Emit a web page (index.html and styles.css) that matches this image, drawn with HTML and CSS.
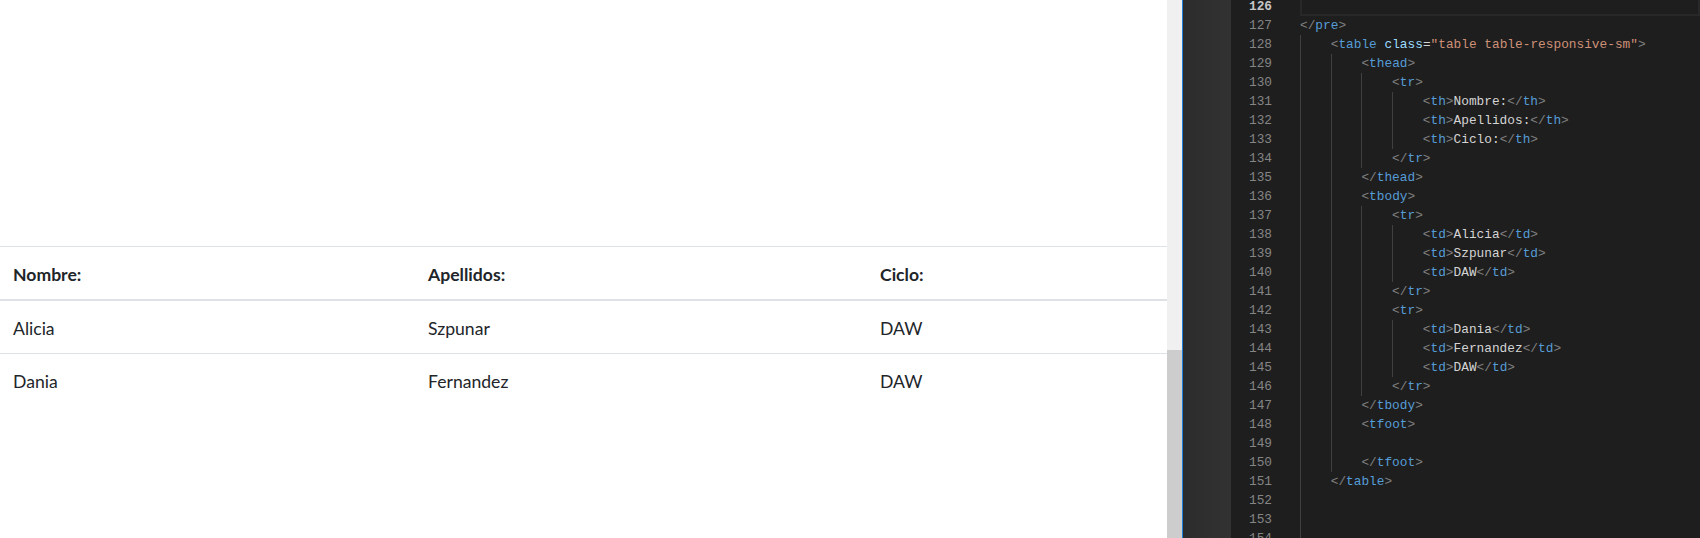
FILE: index.html
```html
<!DOCTYPE html>
<html lang="es">
<head>
<meta charset="utf-8">
<title>Tabla</title>
<link rel="stylesheet" href="styles.css">
</head>
<body>
<div class="app">
  <section class="page">
    <table class="table">
      <colgroup><col class="c1"><col class="c2"><col class="c3"></colgroup>
      <thead>
        <tr><th>Nombre:</th><th>Apellidos:</th><th>Ciclo:</th></tr>
      </thead>
      <tbody>
        <tr><td>Alicia</td><td>Szpunar</td><td>DAW</td></tr>
        <tr><td>Dania</td><td>Fernandez</td><td>DAW</td></tr>
      </tbody>
    </table>
  </section>
  <div class="scrollbar"><div class="track"></div><div class="thumb"></div></div>
  <div class="divider"></div>
  <div class="glyphs"></div>
  <div class="editor">
    <div class="numbers">
      <div class="num active">126</div>
      <div class="num">127</div><div class="num">128</div><div class="num">129</div><div class="num">130</div>
      <div class="num">131</div><div class="num">132</div><div class="num">133</div><div class="num">134</div>
      <div class="num">135</div><div class="num">136</div><div class="num">137</div><div class="num">138</div>
      <div class="num">139</div><div class="num">140</div><div class="num">141</div><div class="num">142</div>
      <div class="num">143</div><div class="num">144</div><div class="num">145</div><div class="num">146</div>
      <div class="num">147</div><div class="num">148</div><div class="num">149</div><div class="num">150</div>
      <div class="num">151</div><div class="num">152</div><div class="num">153</div><div class="num">154</div>
    </div>
    <div class="code">
      <div class="line current"></div>
      <div class="line"><span class="p">&lt;/</span><span class="t">pre</span><span class="p">&gt;</span></div>
      <div class="line"><span class="g"></span><span class="p">&lt;</span><span class="t">table</span> <span class="a">class</span><span class="x">=</span><span class="s">"table table-responsive-sm"</span><span class="p">&gt;</span></div>
      <div class="line"><span class="g"></span><span class="g"></span><span class="p">&lt;</span><span class="t">thead</span><span class="p">&gt;</span></div>
      <div class="line"><span class="g"></span><span class="g"></span><span class="g"></span><span class="p">&lt;</span><span class="t">tr</span><span class="p">&gt;</span></div>
      <div class="line"><span class="g"></span><span class="g"></span><span class="g"></span><span class="g"></span><span class="p">&lt;</span><span class="t">th</span><span class="p">&gt;</span><span class="x">Nombre:</span><span class="p">&lt;/</span><span class="t">th</span><span class="p">&gt;</span></div>
      <div class="line"><span class="g"></span><span class="g"></span><span class="g"></span><span class="g"></span><span class="p">&lt;</span><span class="t">th</span><span class="p">&gt;</span><span class="x">Apellidos:</span><span class="p">&lt;/</span><span class="t">th</span><span class="p">&gt;</span></div>
      <div class="line"><span class="g"></span><span class="g"></span><span class="g"></span><span class="g"></span><span class="p">&lt;</span><span class="t">th</span><span class="p">&gt;</span><span class="x">Ciclo:</span><span class="p">&lt;/</span><span class="t">th</span><span class="p">&gt;</span></div>
      <div class="line"><span class="g"></span><span class="g"></span><span class="g"></span><span class="p">&lt;/</span><span class="t">tr</span><span class="p">&gt;</span></div>
      <div class="line"><span class="g"></span><span class="g"></span><span class="p">&lt;/</span><span class="t">thead</span><span class="p">&gt;</span></div>
      <div class="line"><span class="g"></span><span class="g"></span><span class="p">&lt;</span><span class="t">tbody</span><span class="p">&gt;</span></div>
      <div class="line"><span class="g"></span><span class="g"></span><span class="g"></span><span class="p">&lt;</span><span class="t">tr</span><span class="p">&gt;</span></div>
      <div class="line"><span class="g"></span><span class="g"></span><span class="g"></span><span class="g"></span><span class="p">&lt;</span><span class="t">td</span><span class="p">&gt;</span><span class="x">Alicia</span><span class="p">&lt;/</span><span class="t">td</span><span class="p">&gt;</span></div>
      <div class="line"><span class="g"></span><span class="g"></span><span class="g"></span><span class="g"></span><span class="p">&lt;</span><span class="t">td</span><span class="p">&gt;</span><span class="x">Szpunar</span><span class="p">&lt;/</span><span class="t">td</span><span class="p">&gt;</span></div>
      <div class="line"><span class="g"></span><span class="g"></span><span class="g"></span><span class="g"></span><span class="p">&lt;</span><span class="t">td</span><span class="p">&gt;</span><span class="x">DAW</span><span class="p">&lt;/</span><span class="t">td</span><span class="p">&gt;</span></div>
      <div class="line"><span class="g"></span><span class="g"></span><span class="g"></span><span class="p">&lt;/</span><span class="t">tr</span><span class="p">&gt;</span></div>
      <div class="line"><span class="g"></span><span class="g"></span><span class="g"></span><span class="p">&lt;</span><span class="t">tr</span><span class="p">&gt;</span></div>
      <div class="line"><span class="g"></span><span class="g"></span><span class="g"></span><span class="g"></span><span class="p">&lt;</span><span class="t">td</span><span class="p">&gt;</span><span class="x">Dania</span><span class="p">&lt;/</span><span class="t">td</span><span class="p">&gt;</span></div>
      <div class="line"><span class="g"></span><span class="g"></span><span class="g"></span><span class="g"></span><span class="p">&lt;</span><span class="t">td</span><span class="p">&gt;</span><span class="x">Fernandez</span><span class="p">&lt;/</span><span class="t">td</span><span class="p">&gt;</span></div>
      <div class="line"><span class="g"></span><span class="g"></span><span class="g"></span><span class="g"></span><span class="p">&lt;</span><span class="t">td</span><span class="p">&gt;</span><span class="x">DAW</span><span class="p">&lt;/</span><span class="t">td</span><span class="p">&gt;</span></div>
      <div class="line"><span class="g"></span><span class="g"></span><span class="g"></span><span class="p">&lt;/</span><span class="t">tr</span><span class="p">&gt;</span></div>
      <div class="line"><span class="g"></span><span class="g"></span><span class="p">&lt;/</span><span class="t">tbody</span><span class="p">&gt;</span></div>
      <div class="line"><span class="g"></span><span class="g"></span><span class="p">&lt;</span><span class="t">tfoot</span><span class="p">&gt;</span></div>
      <div class="line"><span class="g"></span><span class="g"></span></div>
      <div class="line"><span class="g"></span><span class="g"></span><span class="p">&lt;/</span><span class="t">tfoot</span><span class="p">&gt;</span></div>
      <div class="line"><span class="g"></span><span class="p">&lt;/</span><span class="t">table</span><span class="p">&gt;</span></div>
      <div class="line"><span class="g"></span></div>
      <div class="line"><span class="g"></span></div>
      <div class="line"><span class="g"></span></div>
    </div>
  </div>
</div>
</body>
</html>
```
FILE: styles.css
```css
html, body {
  margin: 0;
  padding: 0;
  height: 538px;
  overflow: hidden;
  background: #1e1e1e;
}

.app {
  display: flex;
  height: 538px;
  overflow: hidden;
}

/* ---------- web page preview ---------- */
.page {
  width: 1167px;
  flex: none;
  background: #ffffff;
  padding-top: 246px;
  box-sizing: border-box;
  font-family: "Segoe UI", "Lato", "Noto Sans", sans-serif;
  font-size: 17.6px;
  line-height: 26px;
  color: #212529;
}

.table {
  width: 100%;
  border-collapse: collapse;
  table-layout: fixed;
}

.c1 { width: 415px; }
.c2 { width: 452px; }
.c3 { width: 300px; }

.table th,
.table td {
  padding: 15px 13px 11px;
  text-align: left;
  vertical-align: top;
  border-top: 1px solid #dee2e6;
}

.table th {
  font-weight: 700;
}

.table thead th {
  border-bottom: 2px solid #dee2e6;
}

/* ---------- scrollbar ---------- */
.scrollbar {
  width: 15px;
  flex: none;
  display: flex;
  flex-direction: column;
  background: #f0f0f0;
}

.track {
  height: 350px;
  flex: none;
}

.thumb {
  flex: 1;
  background: #cdcdcd;
}

.divider {
  width: 1px;
  flex: none;
  background: #1f7fd4;
}

.glyphs {
  width: 48px;
  flex: none;
  background: linear-gradient(to right, #2c2c2c, #323232);
}

/* ---------- editor ---------- */
.editor {
  flex: 1;
  display: flex;
  align-items: flex-start;
  background: #1e1e1e;
  font-family: "Liberation Mono", "DejaVu Sans Mono", monospace;
  font-size: 12.8px;
  line-height: 19px;
}

.numbers {
  width: 69px;
  flex: none;
  margin-top: -3px;
  box-sizing: border-box;
  padding-right: 28px;
  text-align: right;
  color: #858585;
}

.num {
  height: 19px;
}

.num.active {
  color: #c6c6c6;
  font-weight: 700;
}

.code {
  flex: 1;
  margin-top: -3px;
  color: #d4d4d4;
}

.line {
  height: 19px;
  white-space: pre;
}

.line.current {
  border: 2px solid #282828;
  border-top-color: transparent;
  box-sizing: border-box;
}

.g {
  display: inline-block;
  width: 4ch;
  height: 19px;
  vertical-align: top;
  box-sizing: border-box;
  border-left: 1px solid #404040;
}

.p { color: #808080; }
.t { color: #569cd6; }
.a { color: #9cdcfe; }
.s { color: #ce9178; }
.x { color: #d4d4d4; }
```
